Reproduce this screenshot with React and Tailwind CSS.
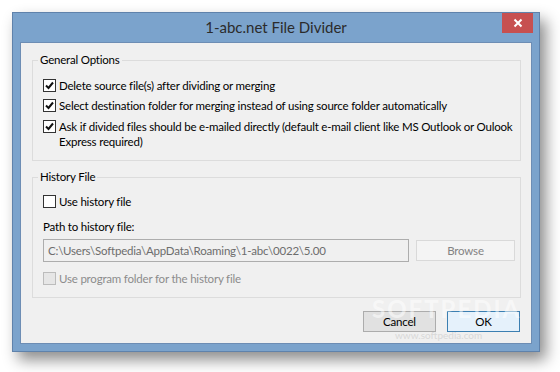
// App.jsx
const font = { fontFamily: 'Lato, "Noto Sans", Arial, sans-serif' };

const Check = ({ checked, disabled }) => (
  <span
    className={
      "w-[13px] h-[13px] shrink-0 flex items-center justify-center border " +
      (disabled ? "bg-[#e6e6e6] border-[#bcbcbc]" : "bg-white border-[#333333]")
    }
  >
    {checked && (
      <svg width="9" height="9" viewBox="0 0 9 9">
        <path d="M1 4.5 L3.5 7 L8 1.5" fill="none" stroke="#111" strokeWidth="2" />
      </svg>
    )}
  </span>
);

const Row = ({ checked, disabled, children, className }) => (
  <div className={"flex items-start gap-[3px] " + (className || "")}>
    <span className="pt-[1px]">
      <Check checked={checked} disabled={disabled} />
    </span>
    <span className={disabled ? "text-[#8c8c8c]" : "text-[#000]"}>{children}</span>
  </div>
);

const App = () => {
  return (
    <div className="w-[560px] h-[372px] bg-white overflow-hidden relative" style={font}>
      <div className="ml-[12px] mt-[12px] w-[528px] h-[340px] flex flex-col bg-[#7ba3cc] border border-[#5f82ab] shadow-[6px_8px_14px_rgba(0,0,0,0.45)]">
        {/* title bar */}
        <div className="h-[29px] flex items-start relative">
          <div className="flex-1 text-center text-[15px] leading-[29px] text-[#2b2b2b]">
            1-abc.net File Divider
          </div>
          <div className="absolute right-[6px] top-0 w-[31px] h-[20px] bg-[#c75050] flex items-center justify-center">
            <svg width="10" height="10" viewBox="0 0 10 10">
              <path d="M1.5 1.5 L8.5 8.5 M8.5 1.5 L1.5 8.5" stroke="#fff" strokeWidth="2" />
            </svg>
          </div>
        </div>
        {/* client */}
        <div className="mx-[7px] mb-[7px] flex-1 bg-[#f0f0f0] border border-[#6d8db4] text-[11.5px] tracking-[-0.2px] leading-[15px] flex flex-col">
          <div className="pl-[11px] pr-[10px] pt-[9px]">
            <fieldset className="border border-[#dcdcdc] h-[109px]">
              <legend className="ml-[5px] px-[2px] text-[#000] leading-[16px]">General Options</legend>
              <div className="pl-[10px] pt-[10px] flex flex-col">
                <Row checked>Delete source file(s) after dividing or merging</Row>
                <Row checked className="mt-[5px]">
                  Select destination folder for merging instead of using source folder automatically
                </Row>
                <Row checked className="mt-[6px]">
                  Ask if divided files should be e-mailed directly (default e-mail client like MS Outlook or Oulook
                  <br />
                  Express required)
                </Row>
              </div>
            </fieldset>
            <fieldset className="border border-[#dcdcdc] h-[129px] mt-[8px]">
              <legend className="ml-[5px] px-[2px] text-[#000] leading-[16px]">History File</legend>
              <div className="pl-[10px] pr-[5px] pt-[9px] flex flex-col">
                <Row>Use history file</Row>
                <div className="mt-[10px] text-[#000]">Path to history file:</div>
                <div className="mt-[5px] flex items-center gap-[7px]">
                  <div className="w-[366px] h-[23px] border border-[#adadad] bg-[#f0f0f0] text-[#6d6d6d] pl-[4px] flex items-center">
                    C:\Users\Softpedia\AppData\Roaming\1-abc\0022\5.00
                  </div>
                  <div className="w-[99px] h-[21px] border border-[#d9d9d9] bg-[#f4f4f4] text-[#838383] flex items-center justify-center">
                    Browse
                  </div>
                </div>
                <Row disabled className="mt-[9px]">Use program folder for the history file</Row>
              </div>
            </fieldset>
          </div>
          <div className="flex justify-end gap-[11px] pr-[11px] mt-[13px]">
            <div className="w-[73px] h-[21px] border border-[#acacac] bg-[#e1e1e1] text-[#000] flex items-center justify-center">
              Cancel
            </div>
            <div className="w-[73px] h-[21px] border border-[#3c7fb1] bg-[#e5f1fb] text-[#000] flex items-center justify-center">
              OK
            </div>
          </div>
        </div>
      </div>
      {/* watermark */}
      <div className="absolute left-[372px] top-[297px] text-[24px] font-bold tracking-[2px] text-white/50 leading-none pointer-events-none">
        SOFTPEDIA
      </div>
      <div className="absolute left-[395px] top-[330px] text-[10px] text-[#d8d8d8] leading-none pointer-events-none">
        www.softpedia.com
      </div>
    </div>
  );
};

export default App;
